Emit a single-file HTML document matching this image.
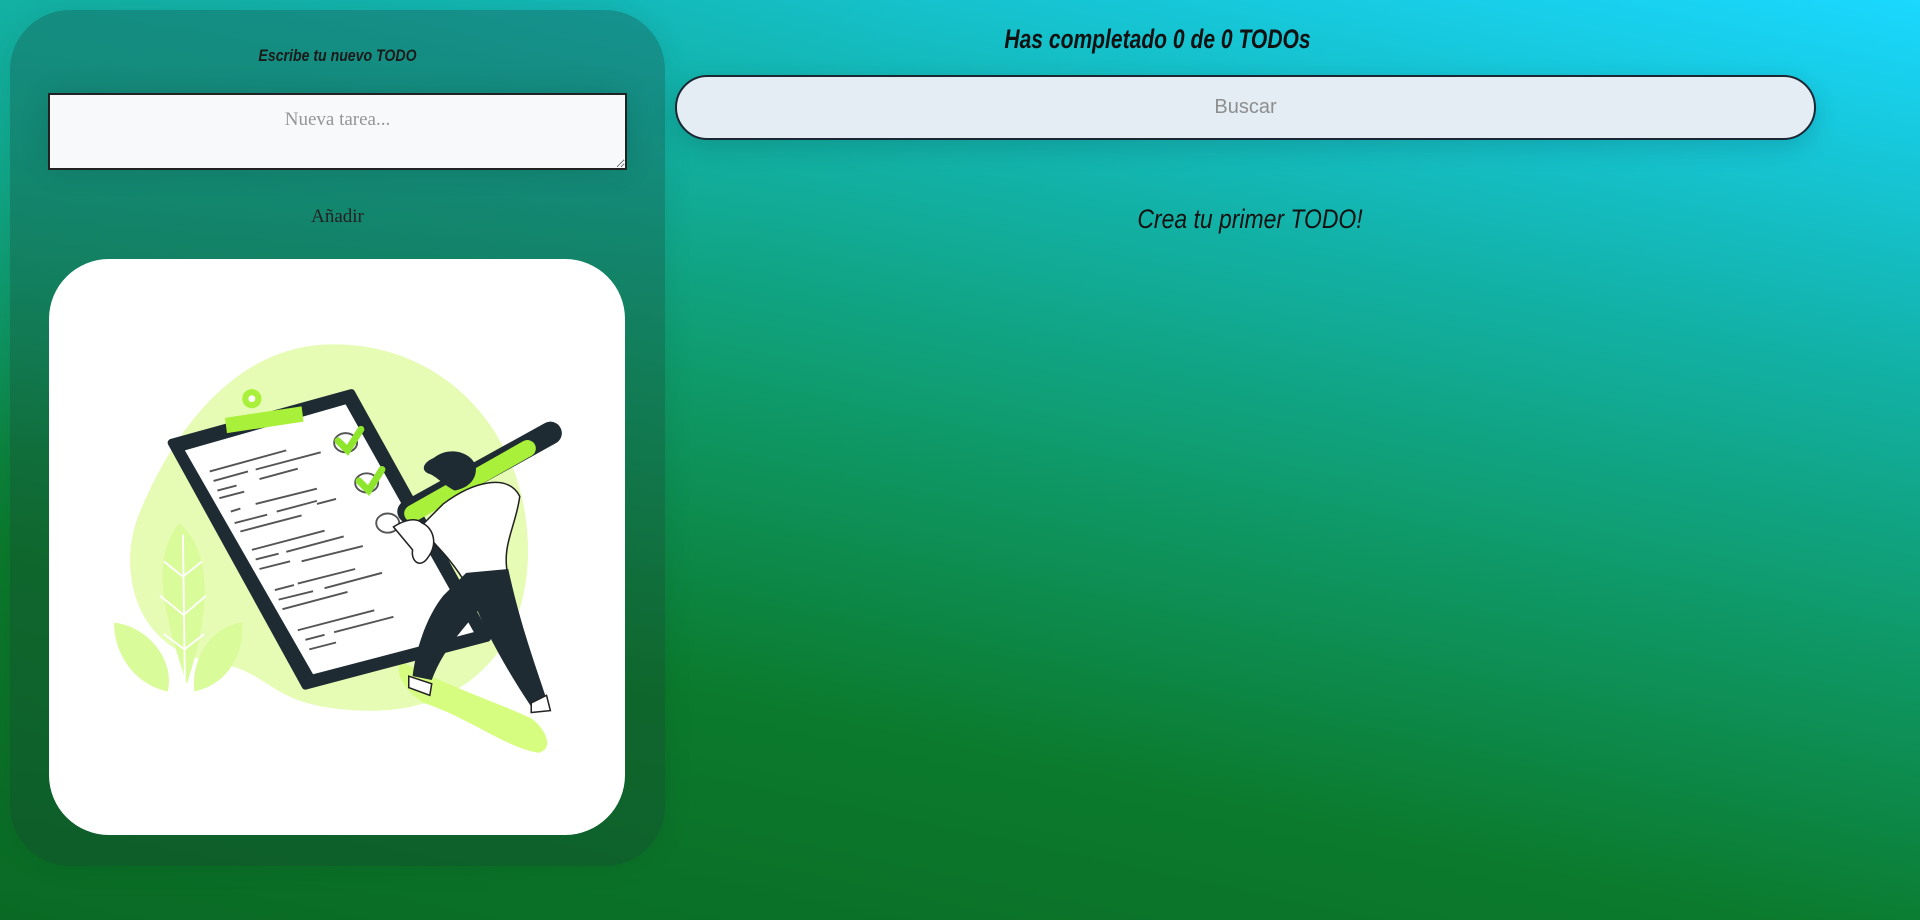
<!DOCTYPE html>
<html><head><meta charset="utf-8"><style>
html,body{margin:0;padding:0;width:1920px;height:920px;overflow:hidden}
body{background:linear-gradient(12deg,#0a6a25 0%,#0b7a2c 28%,#0f9a6a 52%,#13b5b0 75%,#1ad8ff 100%);position:relative;font-family:"Liberation Serif",serif}
.ov{position:absolute;inset:0;background:radial-gradient(ellipse 900px 450px at 0 0,rgba(19,179,168,.6) 0%,rgba(19,179,168,0) 100%)}
.panel{position:absolute;left:10px;top:10px;width:655px;height:856px;border-radius:60px;background:rgba(25,60,50,.3);box-shadow:0 0 30px rgba(0,0,0,.08)}
.h1{position:absolute;left:10px;width:655px;top:46px;text-align:center;font:italic bold 17px "Liberation Sans",sans-serif;color:#1a1a1a;transform:scaleX(.83)}
textarea{position:absolute;left:48px;top:93px;width:579px;height:77px;box-sizing:border-box;border:2px solid #222;background:#f8f9fb;font:19px "Liberation Serif",serif;text-align:center;padding-top:14px;resize:both;box-shadow:0 0 30px rgba(0,0,0,.12)}
textarea::placeholder{color:#959595}
.add{position:absolute;left:10px;width:655px;top:206px;text-align:center;font:19px "Liberation Serif",serif;color:#222}
.card{position:absolute;left:49px;top:259px;width:576px;height:576px;border-radius:60px;background:#fff;overflow:hidden}
.t2{position:absolute;left:900px;width:515px;top:24px;text-align:center;font:italic bold 27px "Liberation Sans",sans-serif;color:#111;transform:scaleX(.78)}
.search{position:absolute;left:675px;top:75px;width:1141px;height:65px;box-sizing:border-box;border:2px solid #1b2733;border-radius:33px;background:#e3edf3;text-align:center;font:20px/61px "Liberation Sans",sans-serif;color:#8e8e8e;box-shadow:0 8px 25px rgba(0,0,0,.15)}
.t3{position:absolute;left:1000px;width:500px;top:204px;text-align:center;font:italic 27px "Liberation Sans",sans-serif;color:#111;transform:scaleX(.85)}
</style></head><body><div class="ov"></div>
<div class="panel"></div>
<div class="h1">Escribe tu nuevo TODO</div>
<textarea placeholder="Nueva tarea..."></textarea>
<div class="add">Añadir</div>
<div class="card"><svg width="576" height="576" viewBox="0 0 1505 1505">
<path d="M700 225 C1000 200 1230 420 1250 720 C1270 1000 1100 1190 820 1180 C560 1170 600 1080 420 1050 C230 1020 180 820 230 680 C300 500 450 250 700 225Z" fill="#e6fcb4"/>
<path d="M920 1050 C1000 1100 1150 1150 1260 1200 C1300 1230 1320 1280 1280 1290 C1200 1280 1100 1200 980 1160 C930 1130 900 1080 920 1050Z" fill="#d6fd80"/>
<path d="M340 690 C420 760 430 900 360 1110 C290 900 270 780 340 690Z" fill="#d9fb9a"/>
<path d="M170 950 C260 960 330 1050 310 1130 C220 1110 170 1030 170 950Z" fill="#d9fb9a"/>
<path d="M505 950 C420 960 370 1050 380 1130 C470 1110 510 1030 505 950Z" fill="#d9fb9a"/>
<path d="M350 720 L355 1100 M350 830 L300 790 M350 830 L400 790 M352 930 L290 880 M352 930 L410 880 M354 1020 L300 980 M354 1020 L405 980" stroke="#fff" stroke-width="5" fill="none"/>
<path d="M320 480 L790 350 L1145 990 L670 1115Z" fill="#1f2b33" stroke="#1f2b33" stroke-width="20" stroke-linejoin="round"/>
<path d="M355 500 L775 380 L1110 975 L690 1085Z" fill="#fff"/>
<path d="M460 415 L660 385 L665 425 L465 455Z" fill="#a8f03a"/>
<circle cx="530" cy="365" r="25" fill="#a8f03a"/><circle cx="530" cy="365" r="9" fill="#fff"/>
<g stroke="#555" stroke-width="5">
<path d="M420 555 L620 500 M430 580 L520 555 M540 550 L710 505 M440 605 L490 592 M550 575 L650 548 M445 625 L510 608"/>
<path d="M475 660 L500 652 M540 640 L700 600 M485 690 L570 668 M595 660 L700 632 M700 640 L750 627 M500 712 L660 670"/>
<path d="M530 760 L720 710 M540 785 L600 770 M620 765 L770 725 M550 810 L630 790 M660 790 L820 750"/>
<path d="M590 865 L640 852 M650 848 L800 810 M600 890 L690 868 M720 860 L870 820 M610 915 L780 870"/>
<path d="M650 970 L850 918 M670 995 L720 982 M745 975 L900 935 M680 1020 L750 1002"/>
</g>
<ellipse cx="775" cy="480" rx="30" ry="25" fill="#fff" stroke="#555" stroke-width="5"/>
<ellipse cx="830" cy="585" rx="30" ry="25" fill="#fff" stroke="#555" stroke-width="5"/>
<ellipse cx="885" cy="690" rx="30" ry="25" fill="#fff" stroke="#555" stroke-width="5"/>
<path d="M755 475 L780 500 L815 445 M810 580 L835 605 L870 550" stroke="#8ee62c" stroke-width="18" fill="none" stroke-linecap="round"/>
<path d="M940 660 L1310 455" stroke="#1f2b33" stroke-width="60" stroke-linecap="round"/>
<path d="M950 665 L1250 495" stroke="#a8f03a" stroke-width="44" stroke-linecap="round"/>
<path d="M1030 640 C1110 580 1200 560 1230 620 C1220 700 1180 750 1200 830 L1090 850 C1050 780 1000 740 970 700Z" fill="#fff" stroke="#222" stroke-width="4"/>
<path d="M1090 820 L1200 810 C1230 950 1270 1060 1300 1150 L1260 1170 C1200 1080 1150 990 1120 920 C1080 970 1030 1020 1000 1100 L950 1090 C960 1010 990 930 1030 880Z" fill="#1f2b33"/>
<path d="M1005 520 C1040 490 1100 500 1115 540 C1120 580 1090 600 1060 605 C1030 590 1010 565 990 560 C970 550 980 530 1005 520Z" fill="#1f2b33"/>
<path d="M940 1090 L1000 1110 L995 1140 L940 1120Z M1260 1160 L1300 1140 L1310 1180 L1260 1185Z" fill="#fff" stroke="#222" stroke-width="4"/>
<path d="M900 700 C930 680 960 675 975 690 C1000 700 1020 740 990 780 C970 810 945 790 950 760Z" fill="#fff" stroke="#222" stroke-width="4"/>
</svg></div>
<div class="t2">Has completado 0 de 0 TODOs</div>
<div class="search">Buscar</div>
<div class="t3">Crea tu primer TODO!</div>
</body></html>
